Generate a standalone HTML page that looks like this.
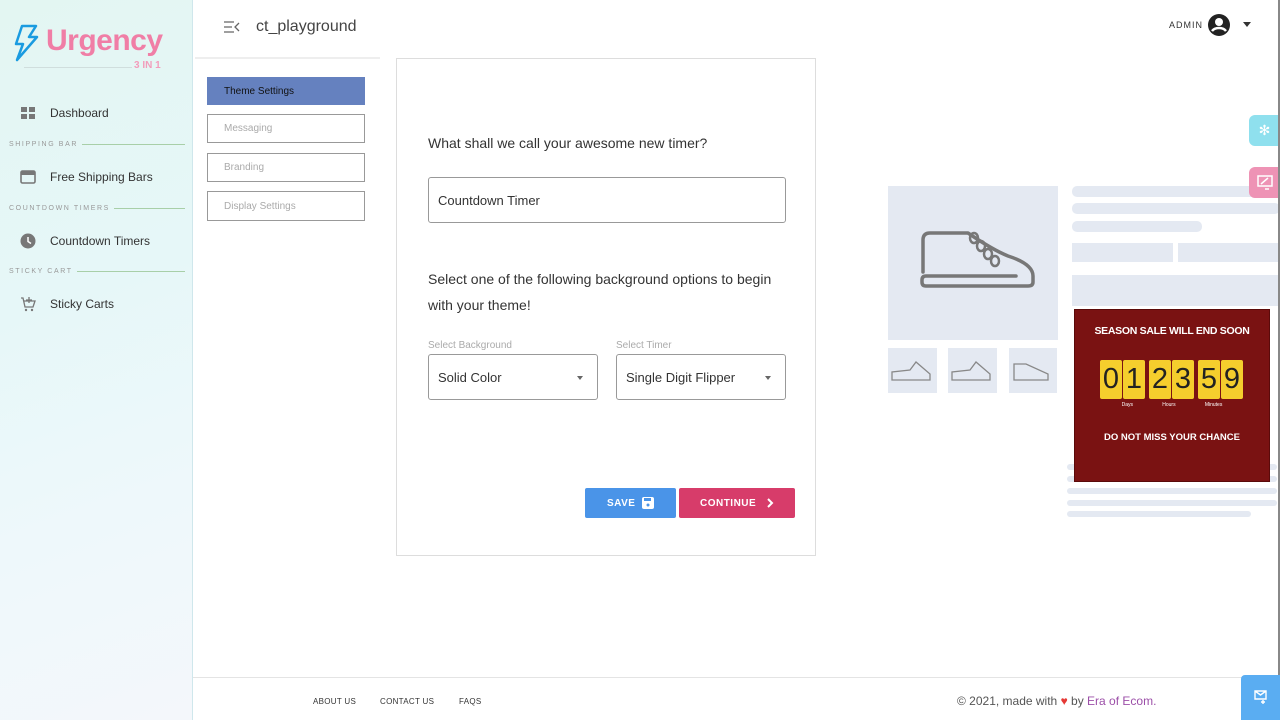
<!DOCTYPE html>
<html><head><meta charset="utf-8"><style>
*{box-sizing:border-box;margin:0;padding:0}
body{width:1280px;height:720px;overflow:hidden;font-family:"Liberation Sans",sans-serif;background:#fff;position:relative;color:#333}
.abs{position:absolute}
#side{left:0;top:0;width:193px;height:720px;background:linear-gradient(160deg,#e3f6f2 0%,#e6f7f8 40%,#eef8fb 70%,#f4f7fb 100%);border-right:1px solid #cfe7ec}
.nav{position:absolute;left:20px;font-size:12px;color:#333;display:flex;align-items:center}
.nav span{margin-left:14px}
.sec{position:absolute;left:9px;font-size:7px;letter-spacing:1.6px;color:#999;display:flex;align-items:center;width:176px}
.sec:after{content:"";flex:1;height:1px;background:#a8cfa8;margin-left:4px}
.tab{position:absolute;left:207px;width:158px;border:1px solid #999;font-size:10px;color:#aaa;padding-left:16px;display:flex;align-items:center}
.bar{position:absolute;background:#e4e9f2;border-radius:5px}
.sel{position:absolute;border:1px solid #999;border-radius:3px;font-size:13px;color:#333;padding-left:9px;display:flex;align-items:center}
.lbl{position:absolute;font-size:10px;color:#aaa}
.d{width:22px;height:39px;background:#f5ce2d;display:inline-flex;align-items:center;justify-content:center;font-size:29px;color:#222;margin-right:1px;border-radius:2px}
</style></head><body>
<div id="side" class="abs">
 <svg class="abs" style="left:13px;top:24px" width="26" height="38" viewBox="0 0 26 38"><path d="M9 2 L23 2 L16 13 L24 13 L4 36 L10 20 L3 20 Z" fill="none" stroke="#1a9be0" stroke-width="2.5" stroke-linejoin="round"/></svg>
 <div class="abs" style="left:46px;top:24px;font-size:30px;font-weight:bold;color:#f07ea6;letter-spacing:-.5px">Urgency</div>
 <div class="abs" style="left:24px;top:67px;width:108px;height:1px;background:#d0dedd"></div>
 <div class="abs" style="left:134px;top:60px;font-size:10px;font-weight:bold;color:#f29cbb">3 IN 1</div>
 <div class="nav" style="top:106px"><svg width="16" height="14"><rect x="1" y="1" width="6" height="5" fill="#777"/><rect x="9" y="1" width="6" height="5" fill="#777"/><rect x="1" y="8" width="6" height="5" fill="#777"/><rect x="9" y="8" width="6" height="5" fill="#777"/></svg><span>Dashboard</span></div>
 <div class="sec" style="top:141px">SHIPPING BAR</div>
 <div class="nav" style="top:170px"><svg width="16" height="14"><rect x="1" y="1" width="14" height="12" rx="1.5" fill="none" stroke="#777" stroke-width="1.6"/><rect x="1" y="1" width="14" height="4" fill="#777"/></svg><span>Free Shipping Bars</span></div>
 <div class="sec" style="top:205px">COUNTDOWN TIMERS</div>
 <div class="nav" style="top:233px"><svg width="16" height="16"><circle cx="8" cy="8" r="7.5" fill="#777"/><path d="M8 4V8.5L11 10.5" stroke="#fff" stroke-width="1.5" fill="none"/></svg><span>Countdown Timers</span></div>
 <div class="sec" style="top:268px">STICKY CART</div>
 <div class="nav" style="top:296px"><svg width="16" height="16"><path d="M1 2H3L5 11H13L15 5H4" fill="none" stroke="#777" stroke-width="1.3"/><circle cx="6" cy="14" r="1.2" fill="#777"/><circle cx="12" cy="14" r="1.2" fill="#777"/><path d="M9 1V7M6 4H12" stroke="#777" stroke-width="1.3"/></svg><span>Sticky Carts</span></div>
</div>
<svg class="abs" style="left:224px;top:21px" width="16" height="12"><path d="M0 1H10M0 6H8M0 11H10M15 2L11 6L15 10" stroke="#666" stroke-width="1.3" fill="none"/></svg>
<div class="abs" style="left:256px;top:18px;font-size:16px;color:#444">ct_playground</div>
<div class="abs" style="left:195px;top:57px;width:185px;height:2px;background:#eee"></div>
<div class="abs" style="left:1169px;top:20px;font-size:9px;letter-spacing:1px;color:#333">ADMIN</div>
<svg class="abs" style="left:1207px;top:13px" width="24" height="24"><circle cx="12" cy="12" r="11" fill="#222"/><circle cx="12" cy="9" r="4" fill="#fff"/><path d="M5 18C8 14 16 14 19 18" stroke="#fff" stroke-width="2.5" fill="none"/></svg>
<div class="abs" style="left:1243px;top:22px;border:4px solid transparent;border-top:5px solid #333"></div>
<div class="tab" style="top:77px;height:28px;background:#6581bf;border-color:#6581bf;color:#111">Theme Settings</div>
<div class="tab" style="top:114px;height:29px">Messaging</div>
<div class="tab" style="top:153px;height:29px">Branding</div>
<div class="tab" style="top:191px;height:30px">Display Settings</div>
<div class="abs" style="left:396px;top:58px;width:420px;height:498px;border:1px solid #ddd"></div>
<div class="abs" style="left:428px;top:135px;font-size:14px;color:#333">What shall we call your awesome new timer?</div>
<div class="sel" style="left:428px;top:177px;width:358px;height:46px">Countdown Timer</div>
<div class="abs" style="left:428px;top:266px;font-size:14px;line-height:26px;color:#333;width:370px">Select one of the following background options to begin with your theme!</div>
<div class="lbl" style="left:428px;top:340px">Select Background</div>
<div class="lbl" style="left:616px;top:340px">Select Timer</div>
<div class="sel" style="left:428px;top:354px;width:170px;height:46px">Solid Color</div>
<div class="sel" style="left:616px;top:354px;width:170px;height:46px">Single Digit Flipper</div>
<div class="abs" style="left:577px;top:376px;border:3.5px solid transparent;border-top:4px solid #666"></div>
<div class="abs" style="left:765px;top:376px;border:3.5px solid transparent;border-top:4px solid #666"></div>
<div class="abs" style="left:585px;top:488px;width:91px;height:30px;background:#4a94e8;border-radius:2px;color:#fff;font-size:10px;font-weight:bold;display:flex;align-items:center;justify-content:center;letter-spacing:.5px">SAVE&nbsp;&nbsp;<svg width="12" height="12"><rect x="0" y="0" width="12" height="12" rx="2" fill="#fff"/><rect x="2" y="1" width="7" height="3" fill="#4a94e8"/><circle cx="6" cy="8" r="1.5" fill="#4a94e8"/></svg></div>
<div class="abs" style="left:679px;top:488px;width:116px;height:30px;background:#d73c6a;border-radius:2px;color:#fff;font-size:10px;font-weight:bold;display:flex;align-items:center;justify-content:center;letter-spacing:.5px">CONTINUE&nbsp;&nbsp;&nbsp;<svg width="8" height="10"><path d="M2 1L6 5L2 9" stroke="#fff" stroke-width="2" fill="none"/></svg></div>
<!-- preview -->
<div class="abs" style="left:888px;top:186px;width:170px;height:154px;background:#e4e9f2"></div>
<svg class="abs" style="left:918px;top:228px" width="120" height="70" viewBox="0 0 120 70"><path d="M5 44V12Q5 5 12 5H50Q75 22 90 28Q115 36 115 48V54Q115 58 110 58H8Q4 58 4 54V52Q4 48 8 48H98" fill="none" stroke="#777" stroke-width="3.5" stroke-linejoin="round" stroke-linecap="round"/><g fill="none" stroke="#777" stroke-width="2.5"><ellipse cx="56" cy="10" rx="4" ry="5"/><ellipse cx="63" cy="18" rx="4" ry="5"/><ellipse cx="70" cy="26" rx="4" ry="5"/><ellipse cx="77" cy="33" rx="4" ry="5"/></g></svg>
<div class="abs" style="left:888px;top:348px;width:49px;height:45px;background:#e4e9f2"></div>
<div class="abs" style="left:948px;top:348px;width:49px;height:45px;background:#e4e9f2"></div>
<div class="abs" style="left:1009px;top:348px;width:48px;height:45px;background:#e4e9f2"></div>
<svg class="abs" style="left:890px;top:360px" width="170" height="22"><g fill="none" stroke="#888" stroke-width="1.3"><path d="M2 18V12L20 10L26 2L40 14V20H2Z"/><path d="M62 18V12L80 10L86 2L100 14V20H62Z"/><path d="M124 18V4H136L158 14V20H124Z"/></g></svg>
<div class="bar" style="left:1072px;top:186px;width:208px;height:11px"></div>
<div class="bar" style="left:1072px;top:203px;width:208px;height:11px"></div>
<div class="bar" style="left:1072px;top:221px;width:130px;height:11px"></div>
<div class="abs" style="left:1072px;top:243px;width:101px;height:19px;background:#e4e9f2"></div>
<div class="abs" style="left:1178px;top:243px;width:102px;height:19px;background:#e4e9f2"></div>
<div class="abs" style="left:1072px;top:275px;width:208px;height:31px;background:#e4e9f2"></div>
<div class="bar" style="left:1067px;top:464px;width:210px;height:6px"></div>
<div class="bar" style="left:1067px;top:476px;width:210px;height:6px"></div>
<div class="bar" style="left:1067px;top:488px;width:210px;height:6px"></div>
<div class="bar" style="left:1067px;top:500px;width:210px;height:6px"></div>
<div class="bar" style="left:1067px;top:511px;width:184px;height:6px"></div>
<div class="abs" style="left:1074px;top:309px;width:196px;height:173px;background:#7a1212;border:1px solid #5a0a0a;text-align:center;color:#fff">
 <div style="font-size:10.5px;font-weight:bold;margin-top:15px;letter-spacing:-.3px">SEASON SALE WILL END SOON</div>
 <div style="margin-top:23px;height:39px"><span class="d">0</span><span class="d">1</span><span style="display:inline-block;width:3px"></span><span class="d">2</span><span class="d">3</span><span style="display:inline-block;width:3px"></span><span class="d">5</span><span class="d">9</span></div>
 <div style="font-size:5px;display:flex;justify-content:space-around;padding:0 32px;margin-top:3px"><span>Days</span><span>Hours</span><span>Minutes</span></div>
 <div style="font-size:9.5px;font-weight:bold;margin-top:24px">DO NOT MISS YOUR CHANCE</div>
</div>
<div class="abs" style="left:1249px;top:115px;width:31px;height:31px;background:#8fe0ee;border-radius:6px 0 0 6px;color:#fff;font-size:14px;text-align:center;line-height:31px">✻</div>
<div class="abs" style="left:1249px;top:167px;width:31px;height:31px;background:#ee93b5;border-radius:6px 0 0 6px"><svg style="margin:8px" width="16" height="15"><rect x="1" y="1" width="14" height="10" fill="none" stroke="#fff" stroke-width="1.5"/><path d="M4 9L11 3M8 14H12" stroke="#fff" stroke-width="1.5"/></svg></div>
<div class="abs" style="left:1278px;top:0;width:2px;height:720px;background:#888"></div>
<div class="abs" style="left:193px;top:677px;width:1087px;height:1px;background:#e4e4e4"></div>
<div class="abs" style="left:313px;top:697px;font-size:8px;color:#333;letter-spacing:.3px">ABOUT US</div>
<div class="abs" style="left:380px;top:697px;font-size:8px;color:#333;letter-spacing:.3px">CONTACT US</div>
<div class="abs" style="left:459px;top:697px;font-size:8px;color:#333;letter-spacing:.3px">FAQS</div>
<div class="abs" style="left:957px;top:694px;font-size:12px;color:#555">© 2021, made with <span style="color:#e53935">♥</span> by <span style="color:#9c4fa8">Era of Ecom.</span></div>
<div class="abs" style="left:1241px;top:675px;width:39px;height:45px;background:#5aadf2;border-radius:4px 0 0 0"><svg style="margin:15px 0 0 13px" width="13" height="14"><path d="M1 1H12V9H1Z M1 1L6.5 5L12 1M9 10V14M7 12H11" stroke="#fff" stroke-width="1.4" fill="none"/></svg></div>
</body></html>
